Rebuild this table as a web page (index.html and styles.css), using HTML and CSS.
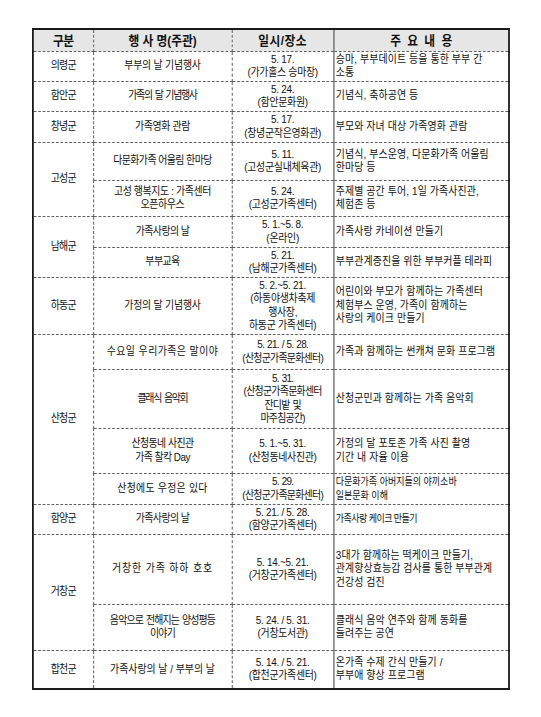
FILE: index.html
```html
<!DOCTYPE html>
<html lang="ko">
<head>
<meta charset="utf-8">
<link rel="stylesheet" href="styles.css">
</head>
<body>
<table class="sched">
  <colgroup>
    <col class="c-gun">
    <col class="c-name">
    <col class="c-date">
    <col class="c-desc">
  </colgroup>
  <thead>
    <tr class="h-head">
      <th class="ls-m6">구분</th>
      <th>행 사 명(주관)</th>
      <th class="date ls-p5">일시/장소</th>
      <th class="desc">주 요 내 용</th>
    </tr>
  </thead>
  <tbody>
    <tr class="h30">
      <td class="gun">의령군</td>
      <td class="name ls-m2">부부의 날 기념행사</td>
      <td class="date">5. 17.<br>(가가홀스 승마장)</td>
      <td class="desc">승마, 부부데이트 등을 통한 부부 간<br>소통</td>
    </tr>
    <tr class="h30">
      <td class="gun">함안군</td>
      <td class="name ls-m14">가족의 달 기념행사</td>
      <td class="date">5. 24.<br>(함안문화원)</td>
      <td class="desc">기념식, 축하공연 등</td>
    </tr>
    <tr class="h31">
      <td class="gun">창녕군</td>
      <td class="name ls-m4">가족영화 관람</td>
      <td class="date">5. 17.<br>(창녕군작은영화관)</td>
      <td class="desc">부모와 자녀 대상 가족영화 관람</td>
    </tr>
    <tr class="h38">
      <td class="gun" rowspan="2">고성군</td>
      <td class="name ls-m6">다문화가족 어울림 한마당</td>
      <td class="date">5. 11.<br>(고성군실내체육관)</td>
      <td class="desc">기념식, 부스운영, 다문화가족 어울림<br>한마당 등</td>
    </tr>
    <tr class="h36">
      <td class="name ls-m4">고성 행복지도 : 가족센터<br>오픈하우스</td>
      <td class="date">5. 24.<br>(고성군가족센터)</td>
      <td class="desc">주제별 공간 투어, 1일 가족사진관,<br>체험존 등</td>
    </tr>
    <tr class="h31">
      <td class="gun" rowspan="2">남해군</td>
      <td class="name ls-m6">가족사랑의 날</td>
      <td class="date">5. 1.~5. 8.<br>(온라인)</td>
      <td class="desc">가족사랑 카네이션 만들기</td>
    </tr>
    <tr class="h30">
      <td class="name ls-m6">부부교육</td>
      <td class="date">5. 21.<br>(남해군가족센터)</td>
      <td class="desc">부부관계증진을 위한 부부커플 테라피</td>
    </tr>
    <tr class="h57">
      <td class="gun">하동군</td>
      <td class="name ls-m2">가정의 달 기념행사</td>
      <td class="date">5. 2.~5. 21.<br>(하동야생차축제<br>행사장,<br>하동군 가족센터)</td>
      <td class="desc">어린이와 부모가 함께하는 가족센터<br>체험부스 운영, 가족이 함께하는<br>사랑의 케이크 만들기</td>
    </tr>
    <tr class="h35">
      <td class="gun" rowspan="4">산청군</td>
      <td class="name ls-p5">수요일 우리가족은 말이야</td>
      <td class="date tight">5. 21. / 5. 28.<br>(산청군가족문화센터)</td>
      <td class="desc">가족과 함께하는 썬캐쳐 문화 프로그램</td>
    </tr>
    <tr class="h59">
      <td class="name ls-m14">클래식 음악회</td>
      <td class="date tight">5. 31.<br>(산청군가족문화센터<br>잔디밭 및<br>마주침공간)</td>
      <td class="desc">산청군민과 함께하는 가족 음악회</td>
    </tr>
    <tr class="h45">
      <td class="name ls-m6">산청동네 사진관<br>가족 찰칵 Day</td>
      <td class="date">5. 1.~5. 31.<br>(산청동네사진관)</td>
      <td class="desc">가정의 달 포토존 가족 사진 촬영<br>기간 내 자율 이용</td>
    </tr>
    <tr class="h31">
      <td class="name ls-p3">산청에도 우정은 있다</td>
      <td class="date tight">5. 29.<br>(산청군가족문화센터)</td>
      <td class="desc small">다문화가족 아버지들의 야끼소바<br>일본문화 이해</td>
    </tr>
    <tr class="h30">
      <td class="gun">함양군</td>
      <td class="name ls-m6">가족사랑의 날</td>
      <td class="date">5. 21. / 5. 28.<br>(함양군가족센터)</td>
      <td class="desc small ls-m6">가족사랑 케이크 만들기</td>
    </tr>
    <tr class="h70">
      <td class="gun" rowspan="2">거창군</td>
      <td class="name ls-p10">거창한 가족 하하 호호</td>
      <td class="date">5. 14.~5. 21.<br>(거창군가족센터)</td>
      <td class="desc">3대가 함께하는 떡케이크 만들기,<br>관계향상효능감 검사를 통한 부부관계<br>건강성 검진</td>
    </tr>
    <tr class="h46">
      <td class="name ls-m9">음악으로 전해지는 양성평등<br>이야기</td>
      <td class="date">5. 24. / 5. 31.<br>(거창도서관)</td>
      <td class="desc">클래식 음악 연주와 함께 동화를<br>들려주는 공연</td>
    </tr>
    <tr class="h39">
      <td class="gun">합천군</td>
      <td class="name ls-0">가족사랑의 날 / 부부의 날</td>
      <td class="date">5. 14. / 5. 21.<br>(합천군가족센터)</td>
      <td class="desc">온가족 수제 간식 만들기 /<br>부부애 향상 프로그램</td>
    </tr>
  </tbody>
</table>
</body>
</html>
```
FILE: styles.css
```css
html, body {
  margin: 0;
  padding: 0;
  background: #ffffff;
}
body {
  padding: 28px 0 0 32px;
  font-family: "Liberation Sans", "Noto Sans CJK KR", sans-serif;
  color: #111111;
}
/* The source document uses a condensed (90%) Hangul width */
.sched {
  border-collapse: collapse;
  table-layout: fixed;
  width: 529px;
  border: 2px solid #1a1a1a;
  font-size: 11px;
  line-height: 13.5px;
  letter-spacing: -0.3px;
  transform: scaleX(0.9);
  transform-origin: 0 0;
}
.c-gun { width: 67px; }
.c-name { width: 154px; }
.c-date { width: 113px; }
.c-desc { width: 195px; }
.sched th,
.sched td {
  border: 1px dashed #555555;
  padding: 0;
  vertical-align: middle;
  text-align: center;
  overflow: hidden;
  white-space: nowrap;
}
.sched th {
  background: #e6e6e6;
  font-weight: bold;
  font-size: 13px;
  color: #111111;
  letter-spacing: 0;
}
.h-head { height: 22px; }
.sched .gun {
  letter-spacing: -0.9px;
}
.sched .desc {
  text-align: left;
  padding-left: 2px;
  border-left: 1px solid #222222;
  letter-spacing: 0.15px;
}
.sched th.desc {
  text-align: center;
  letter-spacing: 1.7px;
}
.sched .tight {
  letter-spacing: -0.8px;
  word-spacing: 1px;
}
.sched .small {
  font-size: 10px;
  letter-spacing: 0;
}
.sched .ls-p10 { letter-spacing: 1px; }
.sched .ls-p5 { letter-spacing: 0.5px; }
.sched .ls-p3 { letter-spacing: 0.3px; }
.sched .ls-0 { letter-spacing: 0; }
.sched .ls-m2 { letter-spacing: -0.2px; }
.sched .ls-m4 { letter-spacing: -0.4px; }
.sched .ls-m6 { letter-spacing: -0.6px; }
.sched .ls-m9 { letter-spacing: -0.9px; word-spacing: 1px; }
.sched .ls-m14 { letter-spacing: -1.4px; word-spacing: 1.5px; }
.h30 { height: 30px; }
.h31 { height: 31px; }
.h35 { height: 35px; }
.h36 { height: 36px; }
.h38 { height: 38px; }
.h39 { height: 39px; }
.h45 { height: 45px; }
.h46 { height: 46px; }
.h57 { height: 57px; }
.h59 { height: 59px; }
.h70 { height: 70px; }
```
